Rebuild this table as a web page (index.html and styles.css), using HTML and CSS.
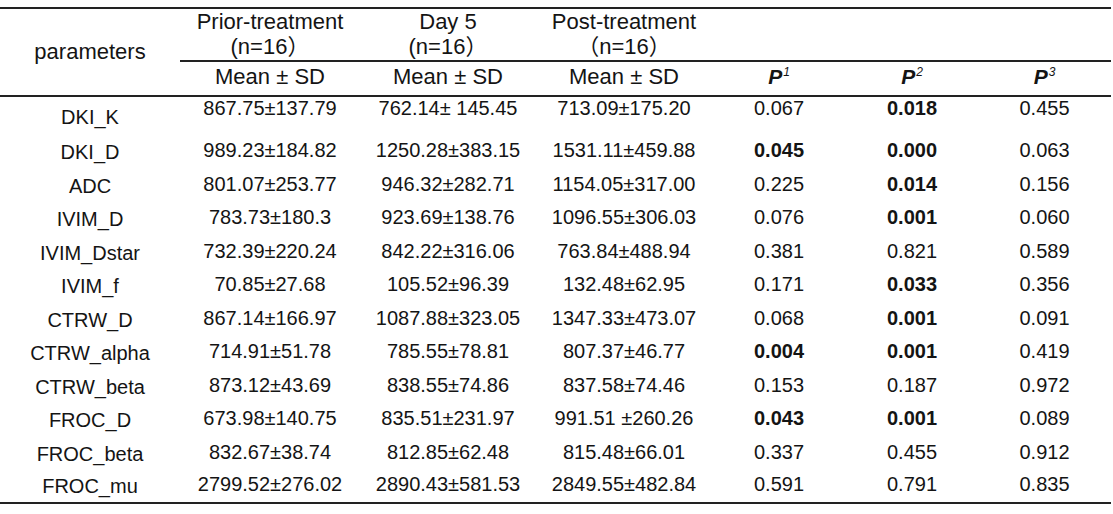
FILE: index.html
```html
<!DOCTYPE html>
<html lang="en">
<head>
<meta charset="utf-8">
<title>Parameters table</title>
<link rel="stylesheet" href="styles.css">
</head>
<body>
<div class="wrap">
<table class="stats">
  <colgroup>
    <col class="c-param">
    <col class="c-prior">
    <col class="c-day">
    <col class="c-post">
    <col class="c-p1">
    <col class="c-p2">
    <col class="c-p3">
  </colgroup>
  <thead>
    <tr class="h1">
      <th class="param" rowspan="2">parameters</th>
      <th>Prior-treatment<br>(n=16）</th>
      <th>Day 5<br>(n=16）</th>
      <th>Post-treatment<br>（n=16）</th>
      <th></th>
      <th></th>
      <th></th>
    </tr>
    <tr class="h2">
      <th>Mean ± SD</th>
      <th>Mean ± SD</th>
      <th>Mean ± SD</th>
      <th><span class="pv">P<sup>1</sup></span></th>
      <th><span class="pv">P<sup>2</sup></span></th>
      <th><span class="pv">P<sup>3</sup></span></th>
    </tr>
  </thead>
  <tbody>
    <tr class="first">
      <td class="lbl">DKI_K</td><td>867.75±137.79</td><td>762.14± 145.45</td><td>713.09±175.20</td><td>0.067</td><td class="b">0.018</td><td>0.455</td>
    </tr>
    <tr class="second">
      <td class="lbl">DKI_D</td><td>989.23±184.82</td><td>1250.28±383.15</td><td>1531.11±459.88</td><td class="b">0.045</td><td class="b">0.000</td><td>0.063</td>
    </tr>
    <tr>
      <td class="lbl">ADC</td><td>801.07±253.77</td><td>946.32±282.71</td><td>1154.05±317.00</td><td>0.225</td><td class="b">0.014</td><td>0.156</td>
    </tr>
    <tr>
      <td class="lbl">IVIM_D</td><td>783.73±180.3</td><td>923.69±138.76</td><td>1096.55±306.03</td><td>0.076</td><td class="b">0.001</td><td>0.060</td>
    </tr>
    <tr>
      <td class="lbl">IVIM_Dstar</td><td>732.39±220.24</td><td>842.22±316.06</td><td>763.84±488.94</td><td>0.381</td><td>0.821</td><td>0.589</td>
    </tr>
    <tr>
      <td class="lbl">IVIM_f</td><td>70.85±27.68</td><td>105.52±96.39</td><td>132.48±62.95</td><td>0.171</td><td class="b">0.033</td><td>0.356</td>
    </tr>
    <tr>
      <td class="lbl">CTRW_D</td><td>867.14±166.97</td><td>1087.88±323.05</td><td>1347.33±473.07</td><td>0.068</td><td class="b">0.001</td><td>0.091</td>
    </tr>
    <tr>
      <td class="lbl">CTRW_alpha</td><td>714.91±51.78</td><td>785.55±78.81</td><td>807.37±46.77</td><td class="b">0.004</td><td class="b">0.001</td><td>0.419</td>
    </tr>
    <tr>
      <td class="lbl">CTRW_beta</td><td>873.12±43.69</td><td>838.55±74.86</td><td>837.58±74.46</td><td>0.153</td><td>0.187</td><td>0.972</td>
    </tr>
    <tr>
      <td class="lbl">FROC_D</td><td>673.98±140.75</td><td>835.51±231.97</td><td>991.51 ±260.26</td><td class="b">0.043</td><td class="b">0.001</td><td>0.089</td>
    </tr>
    <tr>
      <td class="lbl">FROC_beta</td><td>832.67±38.74</td><td>812.85±62.48</td><td>815.48±66.01</td><td>0.337</td><td>0.455</td><td>0.912</td>
    </tr>
    <tr class="last">
      <td class="lbl">FROC_mu</td><td>2799.52±276.02</td><td>2890.43±581.53</td><td>2849.55±482.84</td><td>0.591</td><td>0.791</td><td>0.835</td>
    </tr>
  </tbody>
</table>
</div>
</body>
</html>
```

FILE: styles.css
```css
html, body {
  margin: 0;
  padding: 0;
  background: #ffffff;
}

body {
  font-family: "Liberation Sans", "Noto Sans CJK SC", Arial, sans-serif;
  color: #141414;
}

.wrap {
  padding-top: 7px;
}

.stats {
  width: 1111px;
  table-layout: fixed;
  border-collapse: separate;
  border-spacing: 0;
  border-top: 2px solid #222;
}

.c-param { width: 180px; }
.c-prior { width: 180px; }
.c-day { width: 176px; }
.c-post { width: 176px; }
.c-p1 { width: 134px; }
.c-p2 { width: 132px; }
.c-p3 { width: 133px; }

.stats th,
.stats td {
  box-sizing: border-box;
  padding: 0;
  text-align: center;
  font-weight: normal;
  white-space: nowrap;
}

.stats thead th {
  font-size: 22px;
}

.h1 th {
  height: 53px;
  line-height: 25px;
  vertical-align: top;
  border-bottom: 2px solid #222;
}

.h1 th.param {
  vertical-align: middle;
  padding-bottom: 1px;
  line-height: 26px;
}

.h2 th {
  height: 35px;
  line-height: 26px;
  vertical-align: middle;
  padding-bottom: 4px;
  border-bottom: 2px solid #222;
}

.pv {
  font-size: 21px;
  font-weight: bold;
  font-style: italic;
}

.pv sup {
  font-size: 12px;
  font-weight: normal;
  font-style: italic;
  vertical-align: 8px;
  line-height: 0;
  margin-left: 1px;
}

.stats td {
  font-size: 20px;
  line-height: 22px;
  height: 33.5px;
  vertical-align: middle;
}

.stats td.lbl {
  padding-top: 4px;
}

.stats td.b {
  font-weight: bold;
}

.stats tr.first td {
  height: 36px;
  vertical-align: top;
}

.stats tr.first td.lbl {
  vertical-align: middle;
}

.stats tr.second td {
  height: 34px;
}

.stats tr.last td {
  height: 35.5px;
  padding-bottom: 2px;
  border-bottom: 2px solid #222;
}

.stats tr.last td.lbl {
  padding-top: 4px;
  padding-bottom: 2px;
}
```
